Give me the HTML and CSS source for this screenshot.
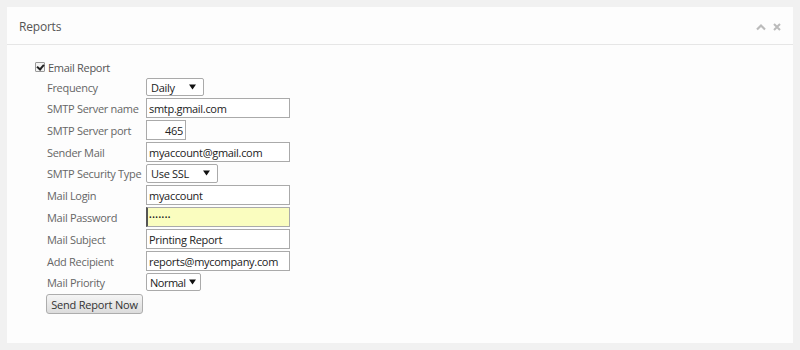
FILE: index.html
```html
<!DOCTYPE html>
<html>
<head>
<meta charset="utf-8">
<link rel="stylesheet" href="styles.css">
</head>
<body>
<div class="panel">
  <div class="panel-head">
    <span class="panel-title">Reports</span>
    <span class="panel-tools">
      <svg class="tool" width="10" height="8" viewBox="0 0 10 8"><path d="M1 6.5 L5 2.5 L9 6.5" fill="none" stroke="#bbb" stroke-width="2.2"/></svg>
      <svg class="tool" width="8" height="8" viewBox="0 0 8 8"><path d="M1 1 L7 7 M7 1 L1 7" fill="none" stroke="#bbb" stroke-width="2"/></svg>
    </span>
  </div>
  <div class="panel-body">
    <label class="check-row"><input type="checkbox" checked class="chk"><span>Email Report</span></label>
    <div class="form">
      <div class="lbl">Frequency</div>
      <div class="ctl"><span class="sel w58"><select><option>Daily</option></select><svg class="arrow" width="7" height="6" viewBox="0 0 7 6"><path d="M0 0.5 H7 L3.5 5.5 Z" fill="#111"/></svg></span></div>
      <div class="lbl">SMTP Server name</div>
      <div class="ctl"><input class="txt" type="text" value="smtp.gmail.com"></div>
      <div class="lbl">SMTP Server port</div>
      <div class="ctl"><input class="txt port" type="text" value="465"></div>
      <div class="lbl">Sender Mail</div>
      <div class="ctl"><input class="txt" type="text" value="myaccount@gmail.com"></div>
      <div class="lbl">SMTP Security Type</div>
      <div class="ctl"><span class="sel w72 tall"><select><option>Use SSL</option></select><svg class="arrow" width="7" height="6" viewBox="0 0 7 6"><path d="M0 0.5 H7 L3.5 5.5 Z" fill="#111"/></svg></span></div>
      <div class="lbl">Mail Login</div>
      <div class="ctl"><input class="txt" type="text" value="myaccount"></div>
      <div class="lbl">Mail Password</div>
      <div class="ctl"><input class="txt pwd" type="password" value="secret1"></div>
      <div class="lbl">Mail Subject</div>
      <div class="ctl"><input class="txt" type="text" value="Printing Report"></div>
      <div class="lbl">Add Recipient</div>
      <div class="ctl"><input class="txt" type="text" value="reports@mycompany.com"></div>
      <div class="lbl">Mail Priority</div>
      <div class="ctl"><span class="sel w55 arrow-tight"><select><option>Normal</option></select><svg class="arrow" width="7" height="6" viewBox="0 0 7 6"><path d="M0 0.5 H7 L3.5 5.5 Z" fill="#111"/></svg></span></div>
    </div>
    <button class="btn" type="button">Send Report Now</button>
  </div>
</div>
</body>
</html>
```
FILE: styles.css
```css
html, body {
  margin: 0;
  padding: 0;
  background: #f1f1f1;
}
body {
  padding: 7px;
  font-family: "Open Sans", "DejaVu Sans", sans-serif;
}
.panel {
  background: #fdfdfd;
  height: 336px;
  box-sizing: border-box;
}
.panel-head {
  height: 38px;
  box-sizing: border-box;
  border-bottom: 1px solid #e6e6e6;
  display: flex;
  align-items: center;
  justify-content: space-between;
  padding: 0 12px 0 12px;
}
.panel-title {
  font-size: 12px;
  color: #555;
  margin-top: 2px;
  letter-spacing: -0.2px;
}
.panel-tools {
  display: flex;
  align-items: center;
  gap: 7px;
  margin-top: 2px;
}
.tool { display: block; }
.panel-body {
  padding: 14px 0 0 28px;
}
.check-row {
  display: flex;
  align-items: center;
  height: 16px;
  font-size: 11px;
  letter-spacing: -0.3px;
  color: #555;
}
.chk {
  appearance: none;
  -webkit-appearance: none;
  position: relative;
  width: 10px;
  height: 10px;
  margin: 0 3px 0 0;
  border: 1px solid #999;
  border-radius: 1px;
  background: #f4f4f4;
  box-sizing: border-box;
}
.chk:checked::after {
  content: "";
  position: absolute;
  left: 2px;
  top: 0;
  width: 3px;
  height: 5px;
  border: solid #222;
  border-width: 0 2px 2px 0;
  transform: rotate(40deg);
}
.form {
  display: grid;
  grid-template-columns: 99px auto;
  row-gap: 2px;
  margin-top: 3px;
  padding-left: 12px;
}
.lbl {
  font-size: 11px;
  letter-spacing: -0.3px;
  color: #666;
  display: flex;
  align-items: center;
  white-space: nowrap;
}
.ctl {
  display: flex;
  align-items: center;
}
.txt {
  box-sizing: border-box;
  width: 144px;
  height: 20px;
  margin: 0;
  border: 1px solid #aaa;
  border-radius: 0;
  padding: 0 2px;
  font-family: "Open Sans", "DejaVu Sans", sans-serif;
  font-size: 11px;
  letter-spacing: -0.3px;
  color: #222;
  background: #fff;
  outline: none;
}
.txt.port {
  width: 40px;
  text-align: right;
}
.txt.pwd {
  background: #fafdbf;
  border-left: 2px solid #555;
  font-size: 7px;
  letter-spacing: 0.5px;
  padding-left: 1px;
}
.sel {
  position: relative;
  display: flex;
  height: 18px;
}
.sel.tall { height: 19px; }
.sel select {
  appearance: none;
  -webkit-appearance: none;
  box-sizing: border-box;
  width: 100%;
  height: 100%;
  margin: 0;
  border: 1px solid #aaa;
  border-radius: 2px;
  background: #fff;
  padding: 0 0 0 4px;
  font-family: "Open Sans", "DejaVu Sans", sans-serif;
  font-size: 11px;
  letter-spacing: -0.3px;
  color: #222;
  outline: none;
}
.sel .arrow {
  position: absolute;
  right: 8px;
  top: 6px;
  pointer-events: none;
}
.sel.arrow-tight select { padding-left: 3px; letter-spacing: -0.5px; }
.sel.arrow-tight .arrow { right: 5px; }
.w58 { width: 58px; }
.w72 { width: 72px; }
.w55 { width: 55px; }
.btn {
  margin: 3px 0 0 11px;
  height: 20px;
  width: 97px;
  padding: 0;
  border: 1px solid #adadad;
  border-radius: 3px;
  background: linear-gradient(#f5f5f5, #dcdcdc);
  font-family: "Open Sans", "DejaVu Sans", sans-serif;
  font-size: 11px;
  letter-spacing: -0.2px;
  color: #333;
}
```
